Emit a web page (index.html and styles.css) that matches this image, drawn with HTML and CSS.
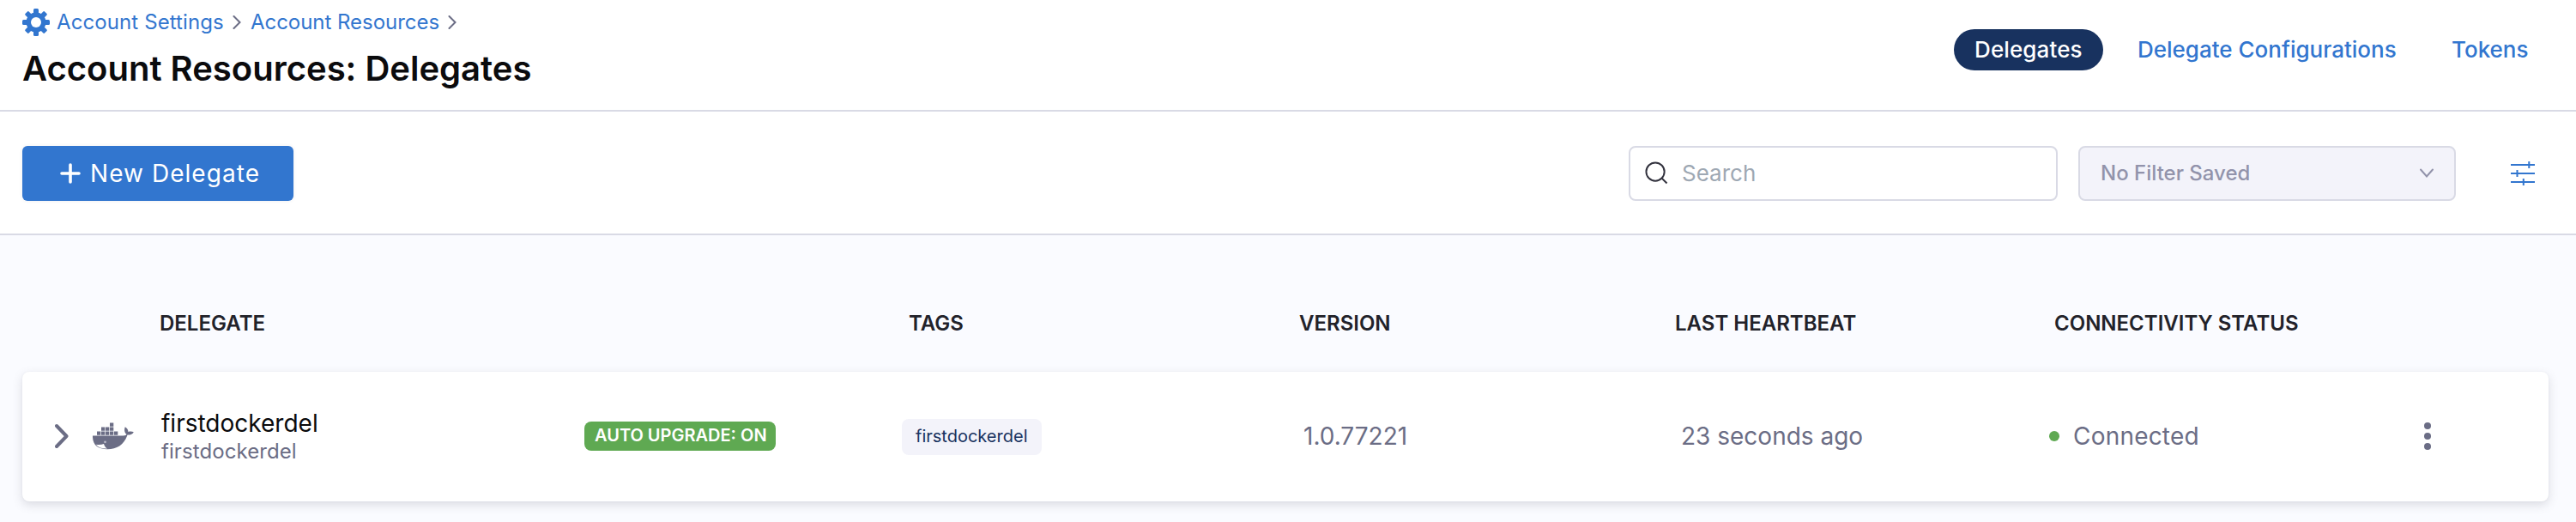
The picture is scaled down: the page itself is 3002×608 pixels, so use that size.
FILE: index.html
```html
<!DOCTYPE html>
<html lang="en">
<head>
<meta charset="utf-8">
<title>Account Resources: Delegates</title>
<link rel="stylesheet" href="styles.css">
</head>
<body>
<header class="page-header">
  <div class="heading">
    <nav class="breadcrumbs">
      <svg class="gear" viewBox="0 0 32 32"><g fill="currentColor"><rect x="13" y="0" width="6" height="32" rx="1.500"/><rect x="13" y="0" width="6" height="32" rx="1.500" transform="rotate(45 16 16)"/><rect x="13" y="0" width="6" height="32" rx="1.500" transform="rotate(90 16 16)"/><rect x="13" y="0" width="6" height="32" rx="1.500" transform="rotate(135 16 16)"/><circle cx="16" cy="16" r="11.500"/></g><circle cx="16" cy="16" r="6" fill="#fff"/></svg>
      <a class="crumb crumb-settings">Account Settings</a>
      <svg class="crumb-sep" viewBox="0 0 10 16"><path d="M1.500 1 8.500 8l-7 7"/></svg>
      <a class="crumb crumb-resources">Account Resources</a>
      <svg class="crumb-sep" viewBox="0 0 10 16"><path d="M1.500 1 8.500 8l-7 7"/></svg>
    </nav>
    <h1 class="title">Account Resources: Delegates</h1>
  </div>
  <nav class="tabs">
    <a class="tab tab-active">Delegates</a>
    <a class="tab tab-config">Delegate Configurations</a>
    <a class="tab tab-tokens">Tokens</a>
  </nav>
</header>
<section class="toolbar">
  <button class="new-button">
    <svg class="plus" viewBox="0 0 24 24"><path d="M12 2v20M2 12h20"/></svg>
    <span>New Delegate</span>
  </button>
  <div class="search">
    <svg class="search-icon" viewBox="0 0 28 28"><circle cx="12.500" cy="12.500" r="11"/><path d="m20.500 20.500 6 6"/></svg>
    <span>Search</span>
  </div>
  <div class="select">
    <span>No Filter Saved</span>
    <svg class="caret" viewBox="0 0 18 12"><path d="m2 1.500 7 8 7-8"/></svg>
  </div>
  <svg class="filter-icon" viewBox="0 0 28 28"><path d="M0 4h28M0 14h28M0 24h28M21.300 0v8M7.500 10v8M14.800 20v8"/></svg>
</section>
<main class="content">
  <div class="grid table-head">
    <span class="col-name">DELEGATE</span>
    <span class="col-tags">TAGS</span>
    <span class="col-version">VERSION</span>
    <span class="col-heartbeat">LAST HEARTBEAT</span>
    <span class="col-status">CONNECTIVITY STATUS</span>
  </div>
  <div class="grid row">
    <div class="icons">
      <svg class="expand" viewBox="0 0 16 30"><path d="m2 3 11.500 12L2 27"/></svg>
      <svg class="docker" viewBox="0 0 48 32"><g fill="currentColor"><path d="M5 10.500h4.300v4.200H5zM10 10.500h4.300v4.200H10zM15 10.500h4.300v4.200H15zM20 10.500h4.300v4.200H20zM25 10.500h4.300v4.200H25zM10 5.500h4.300v4.200H10zM15 5.500h4.300v4.200H15zM20 5.500h4.300v4.200H20zM20 .5h4.300v4.200H20z"/><path d="M0 15.400h35.500c2.600-.1 3.500-.8 4-1.700-2.200-1.600-3.200-4.900-1.700-8.400 2.400 1.500 3.600 3.500 3.600 5.600 2.300-.7 4.800-.5 6.400.4-1.100 2.700-3.800 3.400-7.300 3.300C37 25.500 28.500 31.300 17.300 31.300 5.500 31.300-.4 25.800 0 15.400z"/></g><path d="M3.800 25.700c3.600.5 6.800.2 9.200-.7.500 2.200 1.800 4.200 4 5.600-6.200.2-10.200-1.400-13.200-4.900z" fill="#fff"/><circle cx="14.500" cy="22.800" r="1.400" fill="#b9bac8"/></svg>
    </div>
    <div class="name">
      <span class="name-main">firstdockerdel</span>
      <span class="name-id">firstdockerdel</span>
    </div>
    <div class="upgrade"><span class="badge">AUTO UPGRADE: ON</span></div>
    <div class="tags"><span class="tag">firstdockerdel</span></div>
    <div class="version">1.0.77221</div>
    <div class="heartbeat">23 seconds ago</div>
    <div class="status"><i class="dot"></i><span>Connected</span></div>
    <svg class="menu" viewBox="0 0 8 32"><circle cx="4" cy="4" r="4"/><circle cx="4" cy="16" r="4"/><circle cx="4" cy="28" r="4"/></svg>
  </div>
</main>
</body>
</html>
```
FILE: styles.css
```css
* { box-sizing: border-box; }
body { margin: 0; height: 608px; overflow: hidden; background: #fafbff; color: #22222a; font-family: Inter, "Liberation Sans", sans-serif; white-space: nowrap; }
svg { display: block; flex: none; fill: none; }

.page-header { display: flex; justify-content: space-between; height: 130px; padding: 10px 56px 0 26px; background: #fff; border-bottom: 2px solid #d9dae5; }
.breadcrumbs { display: flex; align-items: center; height: 32px; color: #3276cf; font-size: 24px; line-height: 30px; }
.gear { width: 32px; height: 32px; margin-right: 8px; }
.crumb-settings { width: 195px; margin-right: 10px; letter-spacing: .1px; }
.crumb-resources { width: 220px; margin: 0 10px 0 11px; letter-spacing: -.04px; }
.crumb-sep { width: 10px; height: 16px; stroke: #6b6d85; stroke-width: 2; stroke-linecap: round; }
.title { margin: 14px 0 0; color: #0b0b0d; font-size: 40px; line-height: 48px; font-weight: 600; }
.tabs { display: flex; align-items: center; height: 48px; margin-top: 24px; font-size: 26px; line-height: 48px; font-weight: 500; color: #3276cf; }
.tab-active { width: 174px; height: 48px; padding-left: 24px; border-radius: 24px; background: #18325f; color: #fff; letter-spacing: .12px; }
.tab-config { width: 302px; margin-left: 40px; }
.tab-tokens { width: 89px; margin-left: 64px; }

.toolbar { display: flex; align-items: center; height: 144px; padding: 2px 48px 0 26px; background: #fff; border-bottom: 2px solid #d9dae5; }
.new-button { display: flex; align-items: center; gap: 11px; width: 316px; height: 64px; padding: 0 0 0 44px; border: 0; border-radius: 6px; background: #3276cf; color: #fff; font: 400 28px Inter, sans-serif; letter-spacing: 1.05px; box-shadow: 0 0 4px rgba(40, 41, 61, .08); }
.plus { width: 24px; height: 24px; stroke: #fff; stroke-width: 3.6; stroke-linecap: round; }
.search { display: flex; align-items: center; width: 500px; height: 64px; margin-left: auto; padding-left: 17px; border: 2px solid #d9dae5; border-radius: 8px; background: #fff; color: #9ea8b3; font-size: 26px; line-height: 34px; }
.search-icon { width: 27px; height: 27px; margin: 0 16px 2px 0; stroke: #31313d; stroke-width: 2; }
.select { display: flex; align-items: center; justify-content: space-between; width: 440px; height: 64px; margin-left: 24px; padding: 0 23px 0 24px; border: 2px solid #d9dae5; border-radius: 8px; background: #f3f3fa; color: #9293ab; font-size: 24px; line-height: 30px; font-weight: 500; }
.caret { width: 18px; height: 12px; stroke: #9293ab; stroke-width: 2; stroke-linecap: round; }
.filter-icon { width: 28px; height: 28px; margin-left: 64px; stroke: #3276cf; stroke-width: 2; }

.content { padding: 87px 32px 0 26px; }
.grid { display: grid; grid-template-columns: 162px 493px 370px 469px 441px 427px 437px 145px; align-items: center; }
.table-head { height: 32px; font-size: 24px; line-height: 32px; font-weight: 600; }
.col-name { grid-column: 2; margin-left: -2px; }
.col-tags { grid-column: 4; margin-left: 8px; }
.col-version { grid-column: 5; margin-left: -6px; }
.col-heartbeat { grid-column: 6; margin-left: -9px; }
.col-status { grid-column: 7; margin-left: 6px; }
.row { height: 151px; margin-top: 40px; padding-bottom: 1px; border-radius: 8px; background: #fff; box-shadow: 0 0 2px rgba(40, 41, 61, .06), 0 4px 12px rgba(96, 97, 112, .2); color: #6b6d85; font-size: 28px; line-height: 34px; }
.icons { display: flex; align-items: center; gap: 28px; padding-left: 38px; }
.expand { width: 16px; height: 30px; stroke: #6b6d85; stroke-width: 4; stroke-linecap: round; stroke-linejoin: round; }
.docker { width: 48px; height: 32px; color: #6b6d85; }
.name { display: flex; flex-direction: column; margin-top: 2px; }
.name-main { color: #0b0b0d; line-height: 34px; }
.name-id { font-size: 24px; line-height: 32px; letter-spacing: .08px; }
.badge { display: block; width: 223px; height: 34px; padding-left: 12px; border-radius: 8px; background: #5fa952; color: #fff; font-size: 20px; line-height: 32px; font-weight: 600; }
.tag { display: block; width: 163px; height: 42px; margin-top: 2px; padding-left: 16px; border-radius: 8px; background: #f3f3fa; color: #18325f; font-size: 20px; line-height: 40px; }
.version { margin-left: -1px; }
.heartbeat { margin-left: -2px; }
.status { display: flex; align-items: center; gap: 16px; letter-spacing: .2px; }
.dot { width: 12px; height: 12px; border-radius: 50%; background: #5fa952; }
.menu { width: 8px; height: 32px; fill: #6b6d85; }
```
